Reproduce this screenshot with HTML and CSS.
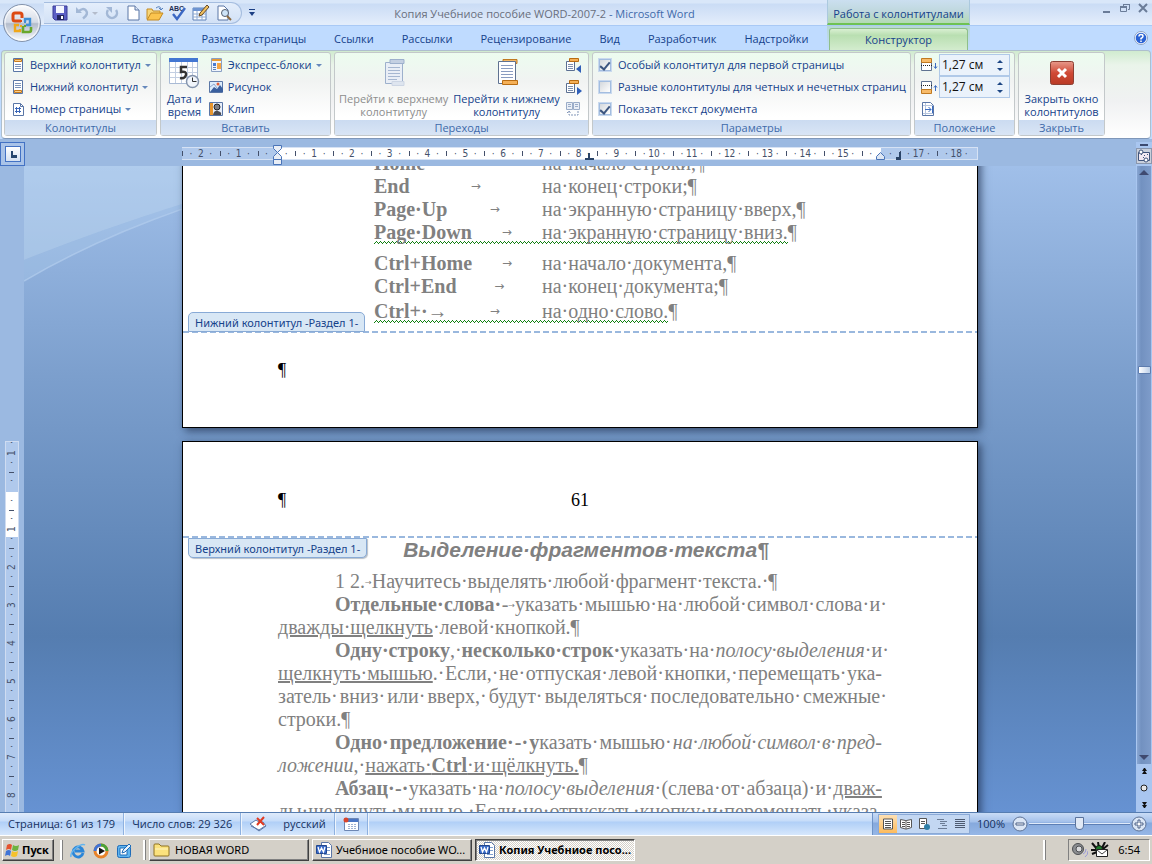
FILE: index.html
```html
<!doctype html>
<html lang="ru">

<head>
  <meta charset="UTF-8">
  <title>Копия Учебниое пособие WORD-2007-2 - Microsoft Word</title>
  <link rel="stylesheet" href="styles.css">
</head>

<body>

  <header class="titlebar">
    <button class="office" aria-label="Office">
      <svg width="40" height="40" viewBox="0 0 40 40">
        <defs>
          <linearGradient id="orb" x1="0" y1="0" x2="0" y2="1">
            <stop offset="0" stop-color="#fdfdfe" />
            <stop offset=".48" stop-color="#d5dbe6" />
            <stop offset=".52" stop-color="#b3bccb" />
            <stop offset="1" stop-color="#fafcff" />
          </linearGradient>
        </defs>
        <circle cx="20" cy="20" r="18.5" fill="url(#orb)" stroke="#8292ab" />
        <circle cx="20" cy="20" r="17" fill="none" stroke="#fff" opacity=".8" />
        <g fill="none" stroke-width="3">
          <path d="M19 18h-6q-2 0-2-2v-4q0-2 2-2h5q2 0 2 2v3" stroke="#dd4a12" />
          <path d="M23 19v-3h5v6h-4" stroke="#3f8fd6" stroke-width="2.4" />
          <path d="M17 22h-4v6h5v-2" stroke="#f0a71a" stroke-width="2.4" />
          <path d="M21 23v6h6q2 0 2-2v-3" stroke="#68a82c" stroke-width="2.6" />
        </g>
        <g>
          <rect x="18" y="17" width="2" height="2" fill="#dd4a12" />
          <rect x="22" y="18" width="2" height="2" fill="#3f8fd6" />
          <rect x="18" y="22" width="2" height="2" fill="#f0a71a" />
          <rect x="22" y="22" width="2" height="2" fill="#68a82c" />
        </g>
      </svg>
    </button>
    <div class="qat">
      <button aria-label="Сохранить"><svg width="16" height="16" viewBox="0 0 16 16"><path d="M1 1h14v14H3l-2-2z" fill="#5b5fc4" stroke="#3a3d97" /><path d="M4 1h8v7H4z" fill="#f4f6ff" /><path d="M5 10h7v5H5z" fill="#23265f" /><path d="M9 11h2v3H9z" fill="#fff" /></svg></button>
      <button aria-label="Отменить"><svg width="26" height="16" viewBox="0 0 26 16"><path d="M3 2v6h6z" fill="#a3b8d6" /><path d="M5 7q5-5 8-1.500t-3 8" fill="none" stroke="#a3b8d6" stroke-width="2.500" /><path d="M19 7h6l-3 3z" fill="#b4bccb" /></svg></button>
      <button aria-label="Вернуть"><svg width="16" height="16" viewBox="0 0 16 16"><path d="M4 5a5 5 0 1 0 8 0" fill="none" stroke="#a3b8d6" stroke-width="2.500" /><path d="M2 2h6v6z" fill="#a3b8d6" /></svg></button>
      <button aria-label="Создать"><svg width="16" height="16" viewBox="0 0 16 16"><path d="M3 1h7l4 4v10H3z" fill="#fff" stroke="#5a76a6" /><path d="M10 1v4h4" fill="#dce6f4" stroke="#5a76a6" /></svg></button>
      <button aria-label="Открыть"><svg width="18" height="16" viewBox="0 0 18 16"><path d="M1 14V4h5l1 2h7v3" fill="#f7d679" stroke="#c48a22" /><path d="M1 15l4-7h12l-4 7z" fill="#fbc44e" stroke="#c48a22" /><path d="M10 3q4-3 5 1M13 3l2 2 2-2" fill="none" stroke="#5681bd" /></svg></button>
      <button aria-label="Правописание"><svg width="18" height="18" viewBox="0 0 18 18"><text x="0" y="7" class="abc">ABC</text><path d="M4 10l4 5 8-11" fill="none" stroke="#3c68c4" stroke-width="2.4" /></svg></button>
      <button aria-label="Нарисовать таблицу"><svg width="18" height="16" viewBox="0 0 18 16"><path d="M1 3h13v12H1z" fill="#fff" stroke="#5f82b8" /><path d="M1 3h13v3H1z" fill="#6d94d1" /><path d="M1 9h13M1 12h13M5 6v9M10 6v9" stroke="#8fabd3" /><path d="M7 11l1-3 7-8 2 2-7 8z" fill="#f2c05c" stroke="#654a28" /></svg></button>
      <button aria-label="Просмотр"><svg width="18" height="16" viewBox="0 0 18 16"><path d="M3 1h6l4 4v10H3z" fill="#fff" stroke="#5a76a6" /><circle cx="10" cy="8" r="3.5" fill="#cfe4f7" stroke="#555f70" /><path d="M12 11l4 4" stroke="#8c6a3f" stroke-width="2" /></svg></button>
    </div>
    <button class="qat-more" aria-label="Настройка панели"><svg width="8" height="8" viewBox="0 0 8 8"><path d="M1 0h6v1H1zM1 3h6L4 7z" fill="#1c3f84" /></svg></button>
    <h1 class="caption"><span>Копия Учебниое пособие WORD-2007-2</span> - Microsoft Word</h1>
    <div class="context">Работа с колонтитулами</div>
    <div class="window-buttons">
      <button aria-label="Свернуть"><svg width="10" height="10" viewBox="0 0 10 10"><path d="M1 8h7v2H1z" fill="#6a7c98" /></svg></button>
      <button aria-label="Восстановить"><svg width="10" height="10" viewBox="0 0 10 10"><path d="M3.500 3V1.500h6v5H8M.5 3.500h6v5h-6z" fill="none" stroke="#6a7c98" /><path d="M0 3h7v2H0zM3 1h7v1H3z" fill="#6a7c98" /></svg></button>
      <button aria-label="Закрыть"><svg width="10" height="10" viewBox="0 0 10 10"><path d="M1 1l8 8M9 1L1 9" stroke="#6a7c98" stroke-width="2" /></svg></button>
    </div>
  </header>

  <nav class="tabs">
    <div class="tab-list">
      <a href="#">Главная</a>
      <a href="#">Вставка</a>
      <a href="#">Разметка страницы</a>
      <a href="#">Ссылки</a>
      <a href="#">Рассылки</a>
      <a href="#">Рецензирование</a>
      <a href="#">Вид</a>
      <a href="#">Разработчик</a>
      <a href="#">Надстройки</a>
    </div>
    <div class="tab-context"><a class="active" href="#">Конструктор</a></div>
    <div class="tab-end">
      <button aria-label="Справка"><svg width="14" height="14" viewBox="0 0 14 14"><circle cx="7" cy="7" r="6.500" fill="#fff" stroke="#8da2c4" /><circle cx="7" cy="7" r="5.300" fill="#2a62d4" /><path d="M5 5.500Q5 3.500 7 3.500T9 5.200Q9 6.200 7 7.500v1M7 9.500v1.500" fill="none" stroke="#fff" stroke-width="1.500" /></svg></button>
    </div>
  </nav>

  <main class="ribbon">
    <section class="group g-headers">
      <div class="group-body">
        <div class="stack">
          <button class="item"><svg width="16" height="16" viewBox="0 0 16 16"><path d="M3.500 1.500h9v13h-9z" fill="#fff" stroke="#5a76a6" /><path d="M4.500 2.500h7v2h-7z" fill="#fbd08c" stroke="#c97c1e" /><path d="M5 7.500h6M5 9.500h6M5 11.500h6" stroke="#7c93ba" /></svg>Верхний колонтитул<i class="drop"></i></button>
          <button class="item"><svg width="16" height="16" viewBox="0 0 16 16"><path d="M3.500 1.500h9v13h-9z" fill="#fff" stroke="#5a76a6" /><path d="M5 4.500h6M5 6.500h6M5 8.500h6" stroke="#7c93ba" /><path d="M4.500 11.500h7v2h-7z" fill="#fbd08c" stroke="#c97c1e" /></svg>Нижний колонтитул<i class="drop"></i></button>
          <button class="item"><svg width="16" height="16" viewBox="0 0 16 16"><path d="M3.500 2.500h7l3 3v9h-10z" fill="#fff" stroke="#5a76a6" /><path d="M10.500 2.500v3h3" fill="none" stroke="#5a76a6" /><path d="M6.500 6v6M9.500 6v6M5 7.500h6M5 10.500h6" stroke="#3a66b8" /></svg>Номер страницы<i class="drop"></i></button>
        </div>
      </div>
      <h2>Колонтитулы</h2>
    </section>

    <section class="group g-insert">
      <div class="group-body">
        <button class="big"><svg width="32" height="32" viewBox="0 0 32 32"><path d="M1.500 2.500h28v24h-28z" fill="#fff" stroke="#a9bad5" /><path d="M1 1h29v4H1z" fill="#4377d2" /><path d="M2 10.500h27M2 15.500h27M2 20.500h27M7.500 5v21M13.500 5v21M19.500 5v21M24.500 5v21" stroke="#c3cfe2" /><path d="M19 10h-6v5q6-1 5 3t-6 3" fill="none" stroke="#333" stroke-width="2.500" /><circle cx="24.500" cy="24.500" r="6" fill="#f1f5fb" stroke="#8494ad" stroke-width="1.500" /><path d="M24.500 20.500v4h4" fill="none" stroke="#333" /></svg>Дата и<br>время</button>
        <div class="stack">
          <button class="item"><svg width="16" height="16" viewBox="0 0 16 16"><path d="M3.500 1.500h10v13h-10z" fill="#f0f5fc" stroke="#8aa0c4" /><path d="M4 2h9v2H4z" fill="#e79a35" /><path d="M5 6h3v3H5z" fill="#4b7cd0" /><path d="M9 6h4v6H9z" fill="#f6a644" /><path d="M5 10.500h3M5 12.500h3" stroke="#5b7fb8" /></svg>Экспресс-блоки<i class="drop"></i></button>
          <button class="item"><svg width="16" height="16" viewBox="0 0 16 16"><path d="M1.500 2.500h13v11h-13z" fill="#dcecfb" stroke="#5a76a6" /><path d="M2 13l4-5 3 2 3-4 3 4v3z" fill="#3a5f9e" /><circle cx="10" cy="5" r="1.500" fill="#e2603a" /><path d="M2 8l4-3 3 4" fill="none" stroke="#8ea7cf" /></svg>Рисунок</button>
          <button class="item"><svg width="16" height="16" viewBox="0 0 16 16"><path d="M1.500 1.500h13v13h-13z" fill="#e7eefa" stroke="#5a76a6" /><path d="M2 2h3v12H2z" fill="#e8962e" /><circle cx="9" cy="6" r="3" fill="#7e7e84" stroke="#222" /><path d="M5 14q1-5 5-4t3 4z" fill="#4c4c52" /></svg>Клип</button>
        </div>
      </div>
      <h2>Вставить</h2>
    </section>

    <section class="group g-nav">
      <div class="group-body">
        <button class="big off" disabled><svg width="32" height="32" viewBox="0 0 32 32"><path d="M7.500 5.500h17v21h-17z" fill="#e9eef6" stroke="#9db0cc" /><path d="M12 2.500h14v4H12z" fill="#c4d0e2" stroke="#9db0cc" /><path d="M14 24.500h12v4H14z" fill="#dee5ef" stroke="#cdd6e4" /><path d="M10 10.500h12M10 13.500h12M10 16.500h12M10 19.500h12M10 22.500h9" stroke="#a6b7d1" /></svg>Перейти к верхнему<br>колонтитулу</button>
        <button class="big"><svg width="32" height="32" viewBox="0 0 32 32"><path d="M12 2.500h14v4H12z" fill="#f3b765" stroke="#c07a22" /><path d="M7.500 4.500h17v22h-17z" fill="#fff" stroke="#5f7291" /><path d="M10 8.500h12M10 11.500h12M10 14.500h12M10 17.500h12M10 20.500h12" stroke="#8a9cc0" /><path d="M11.500 23.500h15v4h-15z" fill="#f5b057" stroke="#b86c12" /></svg>Перейти к нижнему<br>колонтитулу</button>
        <div class="stack">
          <button class="item" aria-label="Назад"><svg width="18" height="16" viewBox="0 0 18 16"><path d="M2.500 4.500h8v9h-8z" fill="#fff" stroke="#5a6f92" /><path d="M5.500 1.500h9v3h-9z" fill="#f5b057" stroke="#b86c12" /><path d="M4 7.500h5M4 9.500h5M4 11.500h5" stroke="#7c8fae" /><path d="M17 8v8l-5-4z" fill="#2f5fb8" /></svg></button>
          <button class="item" aria-label="Вперед"><svg width="18" height="16" viewBox="0 0 18 16"><path d="M2.500 4.500h8v9h-8z" fill="#fff" stroke="#5a6f92" /><path d="M5.500 1.500h9v3h-9z" fill="#f5b057" stroke="#b86c12" /><path d="M4 7.500h5M4 9.500h5M4 11.500h5" stroke="#7c8fae" /><path d="M13 8v8l5-4z" fill="#2f5fb8" /></svg></button>
          <button class="item" aria-label="Как в предыдущем разделе"><svg width="18" height="16" viewBox="0 0 18 16"><path d="M2.500 1.500h6v7h-6zM9.500 1.500h6v7h-6z" fill="#e9eef6" stroke="#9aacc8" /><path d="M4 3.500h3M4 5.500h3M11 3.500h3M11 5.500h3" stroke="#9aacc8" /><path d="M5 10v4h9v-4M3 12l2-2 2 2" fill="none" stroke="#8296b8" stroke-dasharray="2 1" /></svg></button>
        </div>
      </div>
      <h2>Переходы</h2>
    </section>

    <section class="group g-options">
      <div class="group-body">
        <div class="stack">
          <label class="check"><input type="checkbox" checked>Особый колонтитул для первой страницы</label>
          <label class="check"><input type="checkbox">Разные колонтитулы для четных и нечетных страниц</label>
          <label class="check"><input type="checkbox" checked>Показать текст документа</label>
        </div>
      </div>
      <h2>Параметры</h2>
    </section>

    <section class="group g-position">
      <div class="group-body">
        <div class="stack">
          <div class="spin">
            <label for="top-pos" aria-label="Верхний колонтитул от края"><svg width="18" height="16" viewBox="0 0 18 16"><path d="M1.500 2.500h10v11h-10z" fill="#fff" stroke="#5f7291" /><path d="M1.500 1.500h10v4h-10z" fill="#f8bb69" stroke="#c07a22" /><path d="M1 8.500h11" stroke="#222" stroke-dasharray="1 1" /><path d="M15.500 6v5M14 9.500l1.500 2 1.500-2" fill="none" stroke="#3b6cc0" /></svg></label>
            <div class="spin-box"><input id="top-pos" type="text" value="1,27 см"><span><button class="up" aria-label="Больше"></button><button class="down" aria-label="Меньше"></button></span></div>
          </div>
          <div class="spin">
            <label for="bottom-pos" aria-label="Нижний колонтитул от края"><svg width="18" height="16" viewBox="0 0 18 16"><path d="M1.500 2.500h10v11h-10z" fill="#fff" stroke="#5f7291" /><path d="M1.500 10.500h10v4h-10z" fill="#f8bb69" stroke="#c07a22" /><path d="M1 6.500h11" stroke="#222" stroke-dasharray="1 1" /><path d="M15.500 12V7M14 8.500l1.500-2 1.500 2" fill="none" stroke="#3b6cc0" /></svg></label>
            <div class="spin-box"><input id="bottom-pos" type="text" value="1,27 см"><span><button class="up" aria-label="Больше"></button><button class="down" aria-label="Меньше"></button></span></div>
          </div>
          <button class="item" aria-label="Вставить табуляцию"><svg width="16" height="16" viewBox="0 0 16 16"><path d="M2.500 1.500h8l3 3v10h-11z" fill="#fff" stroke="#5a76a6" /><path d="M5.500 2v12M3 4.500h10M3 12.500h10" stroke="#b6c5de" /><path d="M5 8.500h6M8.500 6l2.500 2.500L8.500 11M12.500 5v7" fill="none" stroke="#3b6cc0" /></svg></button>
        </div>
      </div>
      <h2>Положение</h2>
    </section>

    <section class="group g-close">
      <div class="group-body">
        <button class="big"><svg width="32" height="32" viewBox="0 0 32 32"><defs><linearGradient id="red" x1="0" y1="0" x2="0" y2="1"><stop offset="0" stop-color="#e79a8b" /><stop offset=".5" stop-color="#d04a36" /><stop offset="1" stop-color="#b93a25" /></linearGradient></defs><rect x="4.500" y="4.500" width="23" height="23" rx="2" fill="url(#red)" stroke="#8c4034" /><path d="M12 12l8 8M20 12l-8 8" stroke="#fff" stroke-width="3" /></svg>Закрыть окно<br>колонтитулов</button>
      </div>
      <h2>Закрыть</h2>
    </section>
  </main>

  <div class="workspace">
    <div class="side">
      <button class="corner" aria-label="По левому краю"><svg width="14" height="14" viewBox="0 0 14 14"><path d="M5 4h2v4h4v3H5z" fill="#27476f" /></svg></button>
      <div class="vruler">
        <ol>
          <li>1</li><li></li><li>1</li><li>2</li><li>3</li><li>4</li><li>5</li><li>6</li><li>7</li><li>8</li>
        </ol>
      </div>
    </div>

    <div class="center">
      <div class="ruler-row">
        <div class="ruler">
          <ol>
            <li>2</li><li>1</li><li></li><li>1</li><li>2</li><li>3</li><li>4</li><li>5</li><li>6</li><li>7</li><li>8</li><li>9</li><li>10</li><li>11</li><li>12</li><li>13</li><li>14</li><li>15</li><li></li><li>17</li><li>18</li>
          </ol>
          <svg class="mark indent" width="11" height="22" viewBox="0 0 11 22"><path d="M1.500 1.500h8v3l-4 4-4-4zM1.500 15.500v-3l4-4 4 4v3zM1.500 15.500h8v5h-8z" fill="#e9eef6" stroke="#4a74b8" /></svg>
          <svg class="mark tab-mid" width="9" height="8" viewBox="0 0 9 8"><path d="M3 0h2v5h4v2H0V5h3z" fill="#2a4468" /></svg>
          <svg class="mark right" width="11" height="9" viewBox="0 0 11 9"><path d="M1.500 7.500v-3l4-4 4 4v3z" fill="#dde6f3" stroke="#4a74b8" /></svg>
          <svg class="mark tab-right" width="7" height="9" viewBox="0 0 7 9"><path d="M4 0h2v8H1V5h3z" fill="#2a4468" /></svg>
        </div>
      </div>

      <div class="view">
        <svg class="swoosh" viewBox="0 0 1112 646" preserveAspectRatio="xMinYMin slice">
          <path d="M0 0H560V0Q300 -10 158 38 Q70 66 0 94z" fill="#c4dcf2" opacity=".45" />
          <path d="M0 94Q70 66 158 38Q230 16 330 0H420Q260 8 158 42Q70 74 0 115z" fill="#b4cfee" opacity=".3" />
          <path d="M0 115Q70 74 158 43" fill="none" stroke="#b9d2f0" opacity=".6" stroke-width="1.500" />
        </svg>

        <article class="page first">
          <div class="body">
            <p class="row"><span class="key"><b>Home</b><span class="arrow">→</span></span>на·начало·строки,¶</p>
            <p class="row"><span class="key"><b>End</b><span class="arrow">→</span></span>на·конец·строки;¶</p>
            <p class="row"><span class="key"><b>Page·Up</b><span class="arrow">→</span></span>на·экранную·страницу·вверх,¶</p>
            <p class="row"><span class="wavy"><span class="key"><b>Page·Down</b><span class="arrow">→</span></span>на·экранную·страницу·вниз.</span>¶</p>
            <p class="row apart"><span class="key"><b>Ctrl+Home</b><span class="arrow">→</span></span>на·начало·документа,¶</p>
            <p class="row"><span class="key"><b>Ctrl+End</b><span class="arrow">→</span></span>на·конец·документа;¶</p>
            <p class="row near"><span class="wavy"><span class="key"><b>Ctrl+·→</b><span class="arrow">→</span></span>на·одно·слово.</span>¶</p>
          </div>
          <footer class="foot">
            <span class="tag above">Нижний колонтитул -Раздел 1-</span>
            <p>¶</p>
          </footer>
        </article>

        <article class="page second">
          <header class="head">
            <p>¶</p>
            <p class="number">61</p>
            <span class="tag below">Верхний колонтитул -Раздел 1-</span>
          </header>
          <div class="body">
            <h2>Выделение·фрагментов·текста¶</h2>
            <p class="line indented left"><span>1 2.<small>→</small>Научитесь·</span><span>выделять·</span><span>любой·</span><span>фрагмент·</span><span>текста.·¶</span></p>
            <p class="line indented hang"><b>Отдельные·</b><b>слова·</b><span>-<small>→</small>указать·</span><span>мышью·</span><span>на·</span><span>любой·</span><span>символ·</span><span>слова·</span><span>и·</span></p>
            <p class="line left"><u>дважды·щелкнуть</u><span>·левой·кнопкой.¶</span></p>
            <p class="line indented hang"><span><b>Одну·</b></span><span><b>строку</b>,·</span><b>несколько·</b><b>строк·</b><span>указать·</span><span>на·</span><em>полосу·</em><span><em>выделения</em>·</span><span>и·</span></p>
            <p class="line"><span><u>щелкнуть·мышью</u>.·</span><span>Если,·</span><span>не·</span><span>отпуская·</span><span>левой·</span><span>кнопки,·</span><span>перемещать·</span><span>ука-</span></p>
            <p class="line hang"><span>затель·</span><span>вниз·</span><span>или·</span><span>вверх,·</span><span>будут·</span><span>выделяться·</span><span>последовательно·</span><span>смежные·</span></p>
            <p class="line left"><span>строки.¶</span></p>
            <p class="line indented"><b>Одно·</b><b>предложение·</b><b>-·</b><span><b>у</b>казать·</span><span>мышью·</span><em>на·</em><em>любой·</em><em>символ·</em><em>в·</em><em>пред-</em></p>
            <p class="line left"><span><em>ложении</em>,·</span><u>нажать·<b>Ctrl</b>·и·щёлкнуть.</u><span>¶</span></p>
            <p class="line indented"><b>Абзац·</b><b>-·</b><span>указать·</span><span>на·</span><em>полосу·</em><span><em>выделения</em>·</span><span>(слева·</span><span>от·</span><span>абзаца)·</span><span>и·</span><u>дваж-</u></p>
            <p class="line"><span>ды·</span><span>щелкнуть·</span><span>мышью.·</span><span>Если·</span><span>не·</span><span>отпускать·</span><span>кнопку·</span><span>и·</span><span>перемещать·</span><span>указа-</span></p>
          </div>
        </article>
      </div>
    </div>

    <div class="scroll">
      <i class="split"></i>
      <button class="ruler-toggle" aria-label="Линейка"><svg width="14" height="14" viewBox="0 0 14 14"><path d="M1.500 3.500h11v8h-11z" fill="#f2e9f2" stroke="#3f547c" /><path d="M4 5h1v1H4zM7 6h1v1H7zM10 5h1v1h-1zM6 8h1v1H6z" fill="#3f547c" /><circle cx="4" cy="3" r="2" fill="#fff" stroke="#3f547c" /><circle cx="9" cy="11" r="2" fill="#fff" stroke="#3f547c" /></svg></button>
      <div class="track">
        <button class="scroll-up" aria-label="Вверх"></button>
        <div class="thumb"></div>
        <button class="scroll-down" aria-label="Вниз"></button>
      </div>
      <div class="browse">
        <button aria-label="Предыдущая страница"><svg width="7" height="7" viewBox="0 0 7 7"><path d="M3 0h1l2 3H1zM3 3h1l2 3H1z" fill="#111" /></svg></button>
        <button aria-label="Выбор объекта перехода"><svg width="8" height="8" viewBox="0 0 8 8"><circle cx="4" cy="4" r="3" fill="#e8e8e8" stroke="#222" /></svg></button>
        <button aria-label="Следующая страница"><svg width="7" height="7" viewBox="0 0 7 7"><path d="M1 1h5L4 4H3zM1 4h5L4 7H3z" fill="#111" /></svg></button>
      </div>
    </div>
  </div>

  <div class="status">
    <button>Страница: 61 из 179</button>
    <button>Число слов: 29 326</button>
    <button class="plain" aria-label="Проверка правописания"><svg width="18" height="16" viewBox="0 0 18 16"><path d="M1 8l6-4 3 2 4 0 3 4-7 5z" fill="#fff" stroke="#5a76a6" /><path d="M2 10l8 4 6-4" fill="none" stroke="#5a76a6" /><path d="M8 2l7 7M15 1L8 9" stroke="#e03a22" stroke-width="2" /></svg></button>
    <button>русский</button>
    <button aria-label="Запись макроса"><svg width="16" height="14" viewBox="0 0 16 14"><path d="M1.500 1.500h14v12h-14z" fill="#fff" stroke="#6d87b4" /><path d="M2 2h13v3H2z" fill="#4a76c4" /><path d="M5 7.500h9M5 9.500h9M5 11.500h9" stroke="#9fb2d2" stroke-dasharray="2 1" /><circle cx="3" cy="3" r="2.500" fill="#d8452c" /></svg></button>
    <div class="zoom">
      <div class="views">
        <button class="on" aria-label="Разметка страницы"><svg width="12" height="12" viewBox="0 0 12 12"><path d="M1.500 1h9v10h-9z" fill="#fff" stroke="#555" /><path d="M3 3.500h6M3 5.500h6M3 7.500h6M3 9.500h6" stroke="#555" /></svg></button>
        <button aria-label="Режим чтения"><svg width="12" height="12" viewBox="0 0 12 12"><path d="M.5 1.500l5 1 1 0 5-1v8l-5 1.500-1 0-5-1.500zM6 2v9" fill="#fff" stroke="#555" /><path d="M2 4.500h3M2 6.500h3M7 4.500h3M7 6.500h3M2 8.500h3M7 8.500h3" stroke="#555" /></svg></button>
        <button aria-label="Веб-документ"><svg width="12" height="12" viewBox="0 0 12 12"><path d="M1.500.5h7v10h-7z" fill="#fff" stroke="#555" /><path d="M3 3.500h4M3 5.500h4" stroke="#555" /><circle cx="9" cy="9" r="3" fill="#2f7fa8" /></svg></button>
        <button aria-label="Структура"><svg width="12" height="12" viewBox="0 0 12 12"><path d="M1 1.500h7M4 3.500h7M4 5.500h5M6 7.500h5M2 10.500h9" stroke="#6c7d96" /></svg></button>
        <button aria-label="Черновик"><svg width="12" height="12" viewBox="0 0 12 12"><path d="M1 1.500h10M1 3.500h10M1 5.500h10M1 7.500h10M1 9.500h10" stroke="#4d5a70" /></svg></button>
      </div>
      <label for="zoom">100%</label>
      <button class="round" aria-label="Уменьшить"><svg width="16" height="16" viewBox="0 0 16 16"><circle cx="8" cy="8" r="7" fill="#dbe6f5" stroke="#5d7296" /><path d="M4 7h8v2H4z" fill="#fff" stroke="#4b6187" /></svg></button>
      <input id="zoom" type="range" min="0" max="100" value="50">
      <button class="round" aria-label="Увеличить"><svg width="16" height="16" viewBox="0 0 16 16"><circle cx="8" cy="8" r="7" fill="#dbe6f5" stroke="#5d7296" /><path d="M7 4h2v3h3v2H9v3H7V9H4V7h3z" fill="#fff" stroke="#4b6187" /></svg></button>
    </div>
  </div>

  <footer class="taskbar">
    <button class="start"><svg width="16" height="14" viewBox="0 0 16 14"><path d="M2 2q3-2 5 0L6 7Q4 5 1 7z" fill="#e5532d" /><path d="M8 2q3 2 6 0l-1 5q-3 2-6 0z" fill="#6cb33f" /><path d="M1 8q3-2 5 0l-1 5q-2-2-5 0z" fill="#3f74d6" /><path d="M7 8q3 2 6 0l-1 5q-3 2-6 0z" fill="#f5c22c" /></svg>Пуск</button>
    <div class="launch">
      <button aria-label="Internet Explorer"><svg width="16" height="16" viewBox="0 0 16 16"><path d="M13 10a5 5 0 1 1 0-2H5" fill="none" stroke="#2a86d8" stroke-width="2.800" /><path d="M1 14Q0 10 6 5t9-3" fill="none" stroke="#63b4ee" stroke-width="1.500" /></svg></button>
      <button aria-label="Windows Media"><svg width="16" height="16" viewBox="0 0 16 16"><circle cx="8" cy="8" r="6" fill="#fff" stroke="#e8832a" stroke-width="3" /><path d="M8 2a6 6 0 0 1 6 6" fill="none" stroke="#4aa33a" stroke-width="3" /><path d="M2 8a6 6 0 0 1 6-6" fill="none" stroke="#3f74d6" stroke-width="3" /><path d="M6 4.500l6 3.500-6 3.500z" fill="#111" /></svg></button>
      <button aria-label="Рабочий стол"><svg width="16" height="16" viewBox="0 0 16 16"><rect x="1.500" y="2.500" width="13" height="12" rx="2" fill="#5fb4ee" stroke="#1f6cb8" /><path d="M4 5h7v7H4z" fill="#fff" stroke="#1f6cb8" /><path d="M6 10l1-3 6-6 2 2-6 6z" fill="#e8f2fc" stroke="#1f6cb8" /></svg></button>
    </div>
    <div class="tasks">
      <button class="task"><svg width="18" height="16" viewBox="0 0 18 16"><path d="M1 13V3q0-1 1-1h4l2 2h7q1 0 1 1v8q0 1-1 1H2q-1 0-1-1z" fill="#fbe27d" stroke="#8f7222" /><path d="M2 7h13" stroke="#fff6c4" /></svg><span>НОВАЯ WORD</span></button>
      <button class="task"><svg width="16" height="16" viewBox="0 0 16 16"><path d="M5.500.5h7l3 3v12h-10z" fill="#fff" stroke="#5a76a6" /><path d="M11 5.500h3M11 8.500h3M8 12.500h6" stroke="#7fa0d0" /><path d="M.5 3.500h10v8H.5z" fill="#3b6cc8" stroke="#21468e" /><path d="M2 5l1.500 5L5.500 6l2 4L9 5" fill="none" stroke="#fff" stroke-width="1.300" /></svg><span>Учебниое пособие WO...</span></button>
      <button class="task pressed"><svg width="16" height="16" viewBox="0 0 16 16"><path d="M5.500.5h7l3 3v12h-10z" fill="#fff" stroke="#5a76a6" /><path d="M11 5.500h3M11 8.500h3M8 12.500h6" stroke="#7fa0d0" /><path d="M.5 3.500h10v8H.5z" fill="#3b6cc8" stroke="#21468e" /><path d="M2 5l1.500 5L5.500 6l2 4L9 5" fill="none" stroke="#fff" stroke-width="1.300" /></svg><span>Копия Учебниое посо...</span></button>
    </div>
    <i class="grip"></i>
    <div class="tray">
      <svg width="16" height="16" viewBox="0 0 16 16"><circle cx="6" cy="7" r="5.500" fill="#8b8d90" stroke="#4d4f52" /><circle cx="7" cy="7" r="3" fill="#d9dadc" stroke="#4d4f52" /><path d="M11 12q3-1 3-5M13 15q3-2 3-6" fill="none" stroke="#9a9ad8" /></svg>
      <svg width="18" height="16" viewBox="0 0 18 16"><path d="M1 1l5 6M7 0l1 6M14 0l-3 6M17 3l-5 4M0 8h6M1 12l5-2" stroke="#111" stroke-width="2" /><circle cx="8" cy="7" r="3.500" fill="#1d7a2a" stroke="#111" /><path d="M5.500 7.500h11v7h-11z" fill="#fff" stroke="#222" /><path d="M6 8l5 4 5-4" fill="none" stroke="#444" /></svg>
      <span>6:54</span>
    </div>
  </footer>

</body>

</html>
```

FILE: styles.css
```css
* {
  margin: 0;
  padding: 0;
  box-sizing: border-box;
}

html,
body {
  height: 100%;
}

body {
  display: flex;
  flex-direction: column;
  overflow: hidden;
  font: 11px/14px "Open Sans", "Noto Sans", sans-serif;
  color: #15428b;
  background: #bfdbff;
}

button,
input {
  font: inherit;
  color: inherit;
  background: none;
  border: 0;
}

a {
  color: inherit;
  text-decoration: none;
}

svg {
  display: block;
  flex: none;
}

ol {
  list-style: none;
}

/* title bar */

.titlebar {
  position: relative;
  flex: none;
  display: flex;
  height: 26px;
  padding-left: 44px;
  border-bottom: 1px solid #a9c9f5;
  background: linear-gradient(#d9e7f9 0, #d9e7f9 3px, #cadcf5 4px, #d6e4f8 14px, #e3edfb 24px);
}

.office {
  position: absolute;
  left: 2px;
  top: 3px;
  z-index: 2;
}

.qat {
  display: flex;
  align-items: center;
  gap: 5px;
  height: 22px;
  margin-top: 2px;
  padding: 0 8px;
  border: 1px solid #a5bddf;
  border-left: 0;
  border-radius: 0 11px 11px 0;
  background: linear-gradient(#e4eefb, #d2e1f6);
}

.abc {
  font: bold 7px "Liberation Sans", sans-serif;
  fill: #1f2f55;
}

.qat-more {
  padding: 0 6px;
}

.caption {
  flex: 1;
  font-size: 11px;
  line-height: 28px;
  font-weight: normal;
  text-align: center;
  white-space: nowrap;
  color: #3e6aaa;
}

.caption span {
  color: #696f7d;
}

.context {
  width: 143px;
  line-height: 28px;
  text-align: center;
  white-space: nowrap;
  border: 1px solid #abc9de;
  border-width: 0 1px;
  border-bottom: 2px solid #6fc254;
  background: linear-gradient(#cbdff0, #bfd8dd 50%, #b4dbb4);
}

.window-buttons {
  display: flex;
  align-items: flex-start;
  justify-content: flex-end;
  gap: 8px;
  width: 182px;
  padding: 3px 4px 0 0;
}

/* tabs */

.tabs {
  flex: none;
  display: flex;
  height: 24px;
  line-height: 26px;
}

.tab-list {
  flex: 1;
  display: flex;
  gap: 28px;
  padding-left: 60px;
  white-space: nowrap;
}

.tab-context {
  width: 143px;
  padding: 2px 2px 0;
  background: linear-gradient(#b7d9d3, #bfdbff);
}

.active {
  display: block;
  height: 22px;
  line-height: 22px;
  text-align: center;
  border: 1px solid #8fbf8a;
  border-bottom: 0;
  border-radius: 3px 3px 0 0;
  background: linear-gradient(#d9efd2, #b9dfb1 30%, #d3ecce);
}

.tab-end {
  display: flex;
  justify-content: flex-end;
  align-items: center;
  width: 182px;
  padding-right: 4px;
}

/* ribbon */

.ribbon {
  flex: none;
  display: flex;
  gap: 3px;
  height: 89px;
  margin: 0 1px;
  padding: 1px 2px 2px;
  border: 1px solid #aebfce;
  border-bottom-color: #7f97b9;
  border-radius: 4px;
  background: linear-gradient(#d0ebcf, #eaf4ea 14px, #f0f1f2 50px, #fff);
}

.group {
  display: flex;
  flex-direction: column;
  border: 1px solid #c3c8ca;
  border-radius: 3px;
  background: linear-gradient(#ecfcef, #f1f3f2 28px, #fff 64px);
}

.group h2 {
  height: 15px;
  font-size: 11px;
  line-height: 15px;
  font-weight: normal;
  text-align: center;
  color: #3e6aaa;
  background: linear-gradient(#cbdbf1, #d9e5f5);
}

.group-body {
  flex: 1;
  display: flex;
}

.g-headers {
  width: 153px;
}

.g-insert {
  width: 171px;
}

.g-nav {
  width: 255px;
}

.g-options {
  width: 319px;
}

.g-position {
  width: 101px;
}

.g-close {
  width: 87px;
}

.stack {
  display: flex;
  flex-direction: column;
  align-items: flex-start;
  padding: 1px 5px 0;
}

.item,
.check {
  display: flex;
  align-items: center;
  gap: 4px;
  height: 22px;
  white-space: nowrap;
}

.drop {
  border: 3px solid transparent;
  border-top-color: #6688bb;
  border-bottom: 0;
}

.big {
  display: flex;
  flex-direction: column;
  align-items: center;
  padding: 4px 6px 0;
  line-height: 13px;
  white-space: nowrap;
}

.big svg {
  margin-bottom: 3px;
}

.g-insert .stack {
  padding-left: 0;
}

.g-nav .stack {
  padding: 1px 0 0 3px;
}

.g-nav .big {
  padding: 4px 1px 0 4px;
}

.g-close .big {
  flex: 1;
  padding: 4px 0 0;
}

.off {
  color: #8d8d8d;
}

.check {
  gap: 7px;
}

.check input {
  appearance: none;
  display: flex;
  align-items: center;
  justify-content: center;
  width: 12px;
  height: 12px;
  margin-left: 1px;
  border: 1px solid #a3bde0;
  outline: 1px solid #c9d9ee;
  background: linear-gradient(135deg, #d4d8dd, #fff);
}

.check input:checked::after {
  content: "";
  width: 4px;
  height: 8px;
  border: solid #3d5680;
  border-width: 0 2px 2px 0;
  transform: rotate(40deg);
}

.spin {
  display: flex;
  align-items: center;
  gap: 1px;
}

.spin-box {
  display: flex;
  width: 71px;
  height: 22px;
  border: 1px solid #b0c9e8;
  background: #eaf2fb;
  color: #111;
}

.spin-box input {
  width: 52px;
  padding-left: 2px;
  font-size: 12px;
}

.spin-box span {
  display: flex;
  flex-direction: column;
  justify-content: center;
  gap: 5px;
  padding-left: 5px;
}

.up,
.down,
.scroll-up,
.scroll-down {
  width: 0;
  height: 0;
  border: 3px solid transparent;
}

.up {
  border-top: 0;
  border-bottom-color: #1d4684;
}

.down {
  border-bottom: 0;
  border-top-color: #1d4684;
}

/* workspace */

.workspace {
  flex: 1;
  min-height: 0;
  display: flex;
  padding-top: 3px;
  background: #9bb9e1;
}

.side {
  flex: none;
  display: flex;
  flex-direction: column;
  width: 24px;
}

.corner {
  flex: none;
  display: flex;
  align-items: center;
  justify-content: center;
  width: 25px;
  height: 24px;
  border: 1px solid #4372c4;
  background: #a9c3e8;
}

.corner svg {
  background: linear-gradient(#fff, #d5e1f2);
  outline: 1px solid #4372c4;
}

.vruler {
  flex: 1;
  margin: 275px 5px 0;
  overflow: hidden;
  border: 1px solid #cfdcf1;
  border-bottom: 0;
  background: linear-gradient(#b0c9ec 50px, #fff 50px, #fff 95px, #b0c9ec 95px);
  font: 10px/12px "DejaVu Sans Condensed", "DejaVu Sans", sans-serif;
  color: #44506a;
}

.vruler ol {
  margin-top: -8px;
  writing-mode: vertical-rl;
  transform: rotate(180deg);
  display: flex;
  flex-direction: row-reverse;
}

.vruler li,
.ruler li {
  display: grid;
  justify-items: center;
  grid-template-columns: 8px 1fr 8px;
  padding-inline: 5px;
}

.vruler li {
  height: 38px;
  background: linear-gradient(#44506a, #44506a) bottom / 5px 1px no-repeat;
}

.vruler li::before,
.vruler li::after,
.ruler li::before,
.ruler li::after {
  content: "·";
}

.vruler li:empty::after,
.ruler li:empty::after {
  grid-column: 3;
}

.center {
  flex: 1;
  min-width: 0;
  display: flex;
  flex-direction: column;
}

.ruler-row {
  flex: none;
  height: 24px;
  padding-top: 5px;
}

.ruler {
  position: relative;
  max-width: 796px;
  height: 13px;
  margin: 0 auto;
  border: 1px solid #d6e2f4;
  border-left: 0;
  background: linear-gradient(90deg, #b0c9ec 96px, #fff 96px, #fff 699px, #b0c9ec 699px);
  font: 10px/11px "DejaVu Sans Condensed", "DejaVu Sans", sans-serif;
  color: #44506a;
}

.ruler ol {
  display: flex;
  padding-right: 2px;
}

.ruler li {
  flex: 1 1 0;
  min-width: 0;
  background: linear-gradient(#44506a, #44506a) left / 1px 5px no-repeat;
}

.mark {
  position: absolute;
}

.indent {
  left: 90px;
  top: -4px;
}

.tab-mid {
  left: 403px;
  bottom: -2px;
}

.right {
  left: 693px;
  bottom: -2px;
}

.tab-right {
  left: 713px;
  bottom: -2px;
}

.view {
  position: relative;
  flex: 1;
  min-height: 0;
  overflow: hidden;
  background: linear-gradient(#a0bfe9, #7c9fcd 210px, #557db0 470px, #6692d2);
}

.swoosh {
  position: absolute;
  left: 0;
  top: 0;
  width: 100%;
  height: 100%;
}

/* paper */

.page {
  position: relative;
  max-width: 796px;
  margin: 0 auto;
  border: 1px solid #000;
  background: #fff;
  box-shadow: 3px 3px 8px rgba(30, 45, 75, .7);
  font: 20px/23px "Liberation Serif", serif;
  color: #808080;
}

.first {
  height: 277px;
  margin-top: -15px;
  margin-bottom: 13px;
}

.first .body {
  height: 179px;
  padding-left: 191px;
}

.row {
  display: flex;
  white-space: nowrap;
}

.apart {
  margin-top: 8px;
}

.near {
  margin-top: 2px;
}

.key {
  display: inline-flex;
  width: 168px;
}

.arrow {
  flex: 1;
  font-family: "DejaVu Sans", sans-serif;
  font-size: 12px;
  text-align: center;
}

.wavy {
  background: url("data:image/svg+xml,%3Csvg xmlns='http://www.w3.org/2000/svg' width='4' height='3'%3E%3Cpath d='M0 2h1v1H0zM1 1h1v1H1zM2 0h1v1H2zM3 1h1v1H3z' fill='%23108010'/%3E%3C/svg%3E") left bottom repeat-x;
}

.foot,
.head {
  position: relative;
  color: #000;
  padding: 0 95px;
  font-size: 18px;
}

.foot {
  padding-top: 28px;
  background: repeating-linear-gradient(90deg, #9ab8de 0, #9ab8de 6px, transparent 6px, transparent 9px) top / 100% 2px no-repeat;
}

.head {
  display: grid;
  grid-template-columns: 1fr auto 1fr;
  height: 96px;
  padding-top: 47px;
  background: repeating-linear-gradient(90deg, #9ab8de 0, #9ab8de 6px, transparent 6px, transparent 9px) bottom / 100% 2px no-repeat;
}

.tag {
  position: absolute;
  left: 5px;
  height: 20px;
  padding: 0 6px;
  border: 1px solid #88aad6;
  background: #d8e7f5;
  color: #15428b;
  font: 11px/20px "Noto Sans", sans-serif;
  white-space: nowrap;
}

.above {
  top: -19px;
  border-radius: 5px 5px 0 0;
}

.below {
  bottom: -20px;
  border-radius: 0 0 5px 5px;
  box-shadow: 1px 1px 1px #b9c0c8;
}

.second .body {
  padding: 0 95px;
}

.second h2 {
  margin-bottom: 9px;
  padding-left: 12px;
  font: italic bold 21px/23px "Liberation Sans", sans-serif;
  text-align: center;
}

.line {
  display: flex;
  justify-content: space-between;
  height: 23px;
  white-space: nowrap;
}

.left {
  justify-content: flex-start;
}

.indented {
  padding-left: 57px;
}

.hang {
  margin-right: -5px;
}

.line small {
  font: 8px/8px "DejaVu Sans", sans-serif;
  vertical-align: middle;
}

/* scroll bar */

.scroll {
  flex: none;
  display: flex;
  flex-direction: column;
  width: 16px;
  background: #a9c6f0;
}

.split {
  height: 2px;
  margin: 2px 4px;
  background: #3c4a70;
}

.ruler-toggle {
  display: flex;
  justify-content: center;
  align-items: center;
  height: 16px;
  border: 1px solid #8a97ae;
  background: #c9cfdb;
}

.track {
  flex: 1;
  display: flex;
  flex-direction: column;
  align-items: center;
  margin: 2px 1px 0;
  padding: 4px 0;
  background: linear-gradient(90deg, #88a6d2, #7291c0 30%, #7e9cca);
}

.scroll-up,
.scroll-down {
  border-width: 5px;
}

.scroll-up {
  border-top: 0;
  border-bottom-color: #3f4a70;
}

.scroll-down {
  margin-top: auto;
  border-bottom: 0;
  border-top-color: #3f4a70;
}

.thumb {
  width: 13px;
  height: 8px;
  margin-top: 191px;
  border: 1px solid #5d7cae;
  border-radius: 1px;
  background: linear-gradient(90deg, #fff, #bccfe8);
}

.browse {
  display: flex;
  flex-direction: column;
  align-items: center;
  justify-content: space-around;
  height: 48px;
}

/* status bar */

.status {
  flex: none;
  display: flex;
  align-items: stretch;
  height: 23px;
  border-top: 1px solid #567db1;
  background: linear-gradient(#dfebfb, #c6dcf9 8px, #b0cff7 9px, #d6e7fc);
  color: #15315f;
  white-space: nowrap;
}

.status > button {
  padding: 0 8px;
  border-right: 1px solid #8eb1e0;
  box-shadow: 1px 0 #eef5fd;
}

.status > .plain {
  padding: 0 8px;
  border: 0;
  box-shadow: none;
}

.zoom {
  display: flex;
  align-items: center;
  gap: 7px;
  margin-left: auto;
  padding: 0 5px;
  border-left: 1px solid #6f93c6;
  background: linear-gradient(#c9dcf6, #a3c0ea 9px, #86a9dd 10px, #96b7e6);
}

.views {
  display: flex;
  border: 1px solid #8aa9d6;
}

.views button {
  display: flex;
  align-items: center;
  justify-content: center;
  width: 18px;
  height: 18px;
  background: #c3d7f2;
}

.views .on {
  background: linear-gradient(#fde0b4, #fdbb5c);
}

#zoom {
  appearance: none;
  width: 101px;
  height: 1px;
  margin: 0 -6px;
  background: #dfeafa;
  border-bottom: 1px solid #5d7fb5;
  box-sizing: content-box;
}

#zoom::-webkit-slider-thumb {
  appearance: none;
  width: 9px;
  height: 13px;
  border: 1px solid #5a739c;
  border-radius: 1px 1px 5px 5px;
  background: #dfe8f5;
}

/* taskbar */

.taskbar {
  flex: none;
  display: flex;
  align-items: center;
  height: 29px;
  padding: 0 2px;
  border-top: 1px solid #fff;
  background: #d4d0c8;
  font: 11px/14px "Noto Sans", sans-serif;
  color: #000;
}

.start,
.task {
  display: flex;
  align-items: center;
  height: 22px;
  border: 1px solid;
  border-color: #fff #404040 #404040 #fff;
  box-shadow: inset -1px -1px #808080;
  white-space: nowrap;
}

.start {
  gap: 1px;
  width: 52px;
  padding: 0 2px;
  font-weight: bold;
}

.launch {
  display: flex;
  gap: 7px;
  height: 20px;
  margin-left: 6px;
  padding: 2px 11px 0 8px;
  border: solid #fff;
  border-width: 0 2px;
  box-shadow: 1px 0 #808080, inset 1px 0 #808080;
}

.tasks {
  flex: 1;
  display: flex;
  gap: 3px;
  margin-left: 4px;
}

.task {
  gap: 4px;
  width: 160px;
  padding: 0 3px;
}

.pressed {
  font-weight: bold;
  border-color: #404040 #fff #fff #404040;
  box-shadow: inset 1px 1px #808080;
  background: repeating-conic-gradient(#fff 0 25%, #d4d0c8 0 50%) 0 0 / 2px 2px;
}

.grip {
  width: 3px;
  height: 20px;
  margin-right: 22px;
  border-left: 2px solid #fff;
  border-right: 1px solid #808080;
}

.tray {
  display: flex;
  align-items: center;
  gap: 3px;
  height: 22px;
  padding: 0 9px 0 3px;
  border: 1px solid;
  border-color: #808080 #fff #fff #808080;
}

.tray span {
  padding-left: 6px;
}
```
